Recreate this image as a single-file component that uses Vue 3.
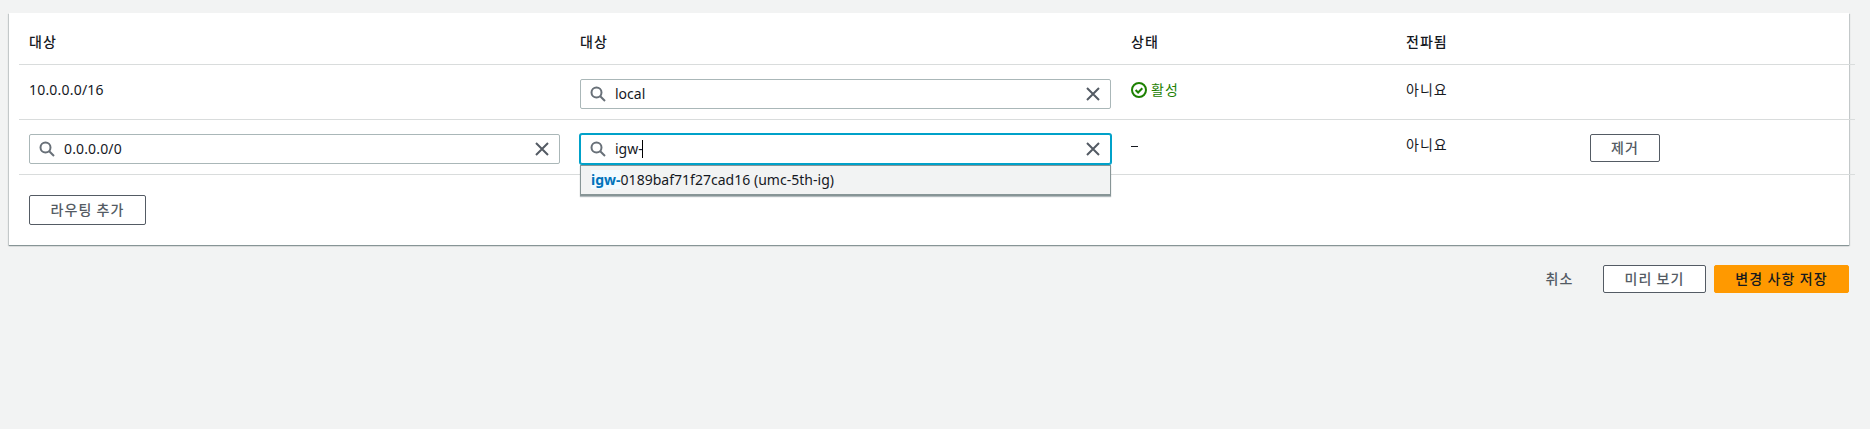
<script setup>
import { ref } from 'vue'

const destination = ref('0.0.0.0/0')
const localTarget = ref('local')
</script>

<template>
  <main class="page">
    <section class="card">
      <div class="table">
        <div class="row head">
          <div class="cell ko strong">대상</div>
          <div class="cell ko strong">대상</div>
          <div class="cell ko strong">상태</div>
          <div class="cell ko strong">전파됨</div>
          <div class="cell"></div>
        </div>

        <div class="row">
          <div class="cell"><span class="plain">10.0.0.0/16</span></div>
          <div class="cell">
            <div class="field">
              <svg class="search" viewBox="0 0 16 16"><circle cx="6.5" cy="6.5" r="5" /><path d="M10.2 10.2 15 15" /></svg>
              <span class="value">{{ localTarget }}</span>
              <svg class="clear" viewBox="0 0 16 16"><path d="m2 2 12 12M14 2 2 14" /></svg>
            </div>
          </div>
          <div class="cell status">
            <svg class="check" viewBox="0 0 16 16"><circle cx="8" cy="8" r="7" /><path d="m4.6 8 2.5 2.5 4.2-4.3" /></svg>
            <span class="ko text active">활성</span>
          </div>
          <div class="cell"><span class="ko text">아니요</span></div>
          <div class="cell"></div>
        </div>

        <div class="row">
          <div class="cell">
            <div class="field">
              <svg class="search" viewBox="0 0 16 16"><circle cx="6.5" cy="6.5" r="5" /><path d="M10.2 10.2 15 15" /></svg>
              <span class="value address">{{ destination }}</span>
              <svg class="clear" viewBox="0 0 16 16"><path d="m2 2 12 12M14 2 2 14" /></svg>
            </div>
          </div>
          <div class="cell">
            <div class="field focused">
              <svg class="search" viewBox="0 0 16 16"><circle cx="6.5" cy="6.5" r="5" /><path d="M10.2 10.2 15 15" /></svg>
              <span class="value">igw-</span><i class="caret"></i>
              <svg class="clear" viewBox="0 0 16 16"><path d="m2 2 12 12M14 2 2 14" /></svg>
              <div class="menu"><span class="option"><b>igw-</b>0189baf71f27cad16 (umc-5th-ig)</span></div>
            </div>
          </div>
          <div class="cell"><span class="dash"></span></div>
          <div class="cell"><span class="ko text">아니요</span></div>
          <div class="cell"><button class="btn remove"><span>제거</span></button></div>
        </div>
      </div>
      <button class="btn add"><span>라우팅 추가</span></button>
    </section>

    <footer class="actions">
      <button class="btn link"><span>취소</span></button>
      <button class="btn preview"><span>미리 보기</span></button>
      <button class="btn primary"><span>변경 사항 저장</span></button>
    </footer>
  </main>
</template>

<style>
body { background: #f2f3f3; }
</style>

<style scoped>
.page {
  box-sizing: border-box;
  height: 429px;
  padding: 13px 21px 0 9px;
  background: #f2f3f3;
  color: #16191f;
  font: 14px/22px "Noto Sans", "Noto Sans CJK KR", sans-serif;
}
.card {
  box-sizing: border-box;
  height: 232px;
  padding: 0 0 0 10px;
  background: #fff;
  box-shadow: 0 1px 0 0 #879596, 0 1px 1px 0 rgba(0, 28, 36, .3), 1px 1px 1px 0 rgba(0, 28, 36, .15), -1px 1px 1px 0 rgba(0, 28, 36, .15);
}
.table { width: 1836px; }
.row {
  box-sizing: border-box;
  display: grid;
  grid-template-columns: 551px 551px 275px 184px 275px;
  height: 55px;
  padding-top: 14px;
  border-bottom: 1px solid #d9dcdc;
}
.head { height: 52px; padding-top: 17px; }
.cell { padding: 0 10px; min-width: 0; }
.ko { font-family: "Noto Sans CJK KR", sans-serif; letter-spacing: 1px; }
.strong { font-weight: 500; }
.text, .plain { display: block; }
.text { margin-top: -1px; }
.plain { letter-spacing: .2px; }
.field {
  position: relative;
  box-sizing: border-box;
  display: flex;
  align-items: center;
  height: 30px;
  padding: 0 9px;
  border: 1px solid #aab7b8;
  border-radius: 2px;
  background: #fff;
}
.focused { border-color: #00a1c9; box-shadow: 0 0 0 1px #00a1c9; }
.search, .clear, .check { width: 16px; height: 16px; flex: none; fill: none; stroke-width: 2; }
.search { stroke: #687078; margin-right: 9px; }
.clear { stroke: #545b64; margin-left: auto; }
.check { stroke: #1d8102; }
.value { white-space: pre; }
.address { letter-spacing: .15px; }
.caret { width: 1px; height: 18px; margin-left: -1px; background: #000; }
.menu {
  position: absolute;
  z-index: 2;
  top: 30px;
  left: -1px;
  right: -1px;
  box-sizing: border-box;
  height: 31px;
  padding: 3px 10px 0;
  border: 1px solid #879596;
  border-bottom-width: 2px;
  background: #f2f3f3;
  box-shadow: 0 1px 1px rgba(0, 28, 36, .3);
}
.option { white-space: pre; letter-spacing: .02px; }
.option b { color: #0073bb; background: #f1faff; }
.status { display: flex; align-items: flex-start; gap: 4px; }
.status .check { margin-top: 3px; }
.active { color: #1d8102; }
.dash { display: block; width: 7px; height: 1px; margin-top: 12px; background: #16191f; }
.btn {
  box-sizing: border-box;
  display: flex;
  align-items: center;
  justify-content: center;
  height: 28px;
  padding: 0 0 2px;
  border: 1px solid #545b64;
  border-radius: 2px;
  background: #fff;
  color: #545b64;
  font: 500 14px/20px "Noto Sans CJK KR", sans-serif;
  letter-spacing: 1.1px;
  white-space: nowrap;
}
.remove { width: 70px; }
.add { width: 117px; height: 30px; margin: 20px 0 0 10px; }
.actions { display: flex; justify-content: flex-end; margin-top: 20px; }
.link { width: 57px; margin-right: 15px; border-color: transparent; background: transparent; }
.preview { width: 103px; margin-right: 8px; }
.primary { width: 135px; border-color: #f90; background: #f90; color: #16191f; }
</style>
